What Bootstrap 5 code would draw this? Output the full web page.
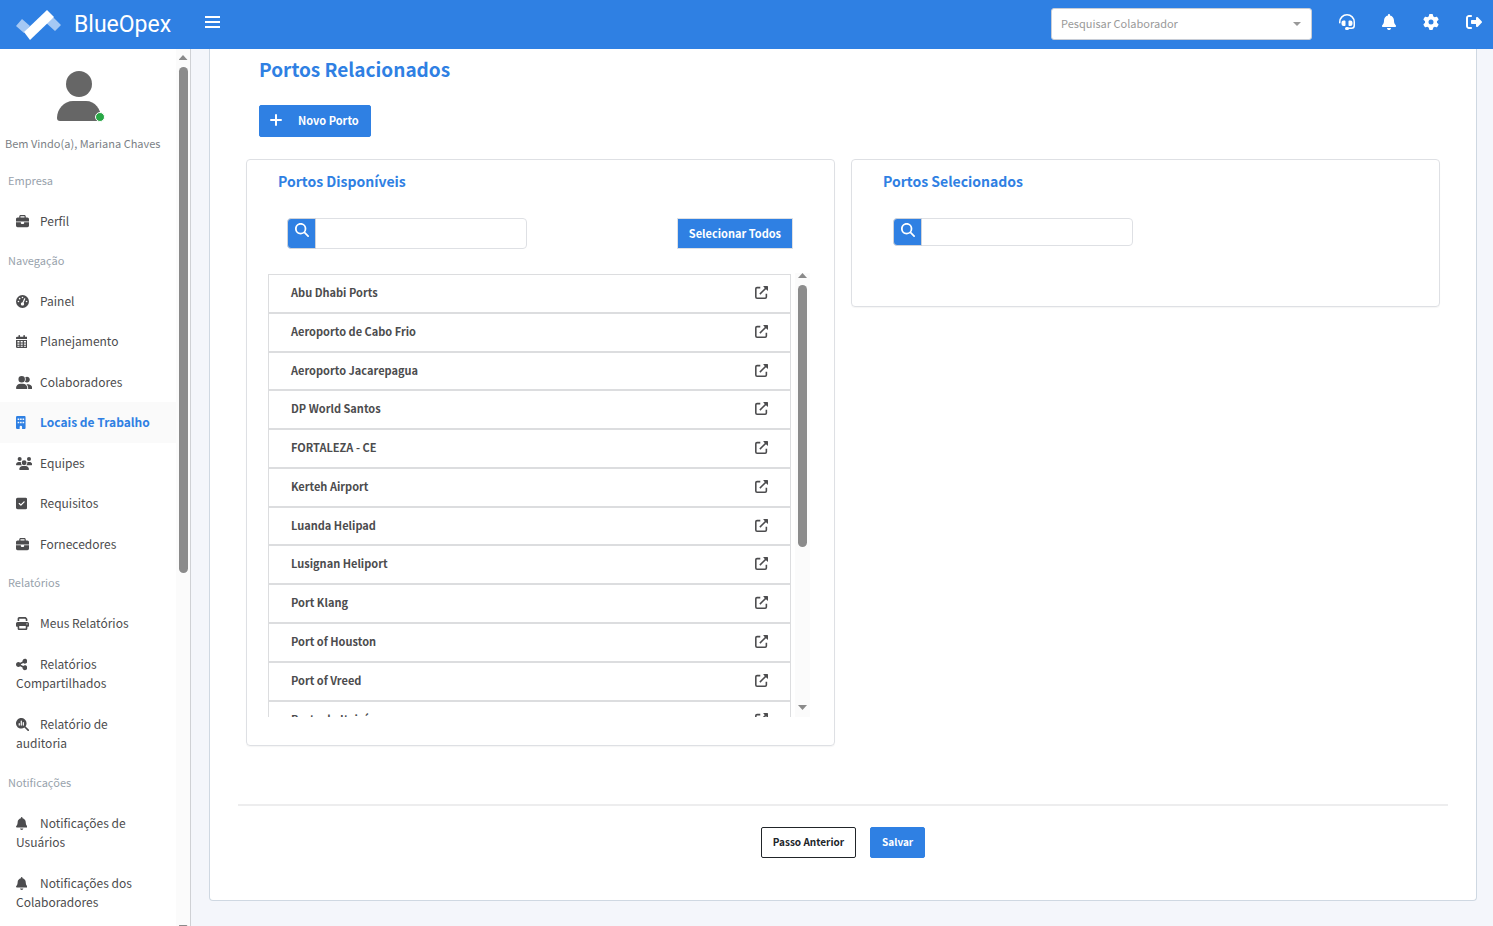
<!DOCTYPE html>
<html lang="pt-BR">
<head>
<meta charset="utf-8">
<meta name="viewport" content="width=device-width, initial-scale=1">
<title>BlueOpex - Portos Relacionados</title>
<link href="https://cdn.jsdelivr.net/npm/bootstrap@5.3.0/dist/css/bootstrap.min.css" rel="stylesheet">
<style>
  :root { --brand: #2f80e3; --ink: #4c4c4e; --line: #dee0e4; }
  body { font-family: "Noto Sans CJK JP", "Noto Sans", sans-serif; font-size: 11px; color: var(--ink); background: #f4f6fb; }
  .ico { height: 1em; width: auto; fill: currentColor; display: inline-block; vertical-align: -2px; }
  .topbar { height: 49px; background: var(--brand); }
  .brand-link { width: 189px; color: #fff; text-decoration: none; }
  .brand-text { font-family: "Roboto", sans-serif; font-size: 23px; line-height: 30px; font-weight: 400; -webkit-text-stroke: 0; }
  .top-nav { gap: 27px; margin: 0 11px 5px 27px; }
  .top-icon { font-size: 16px; line-height: 16px; color: #fff; }
  .employee-pick { appearance: none; width: 261px; height: 32px; margin-bottom: 2px; font-size: 11px; line-height: 18px; color: #999; border: 1px solid #c8cdd6; border-radius: 3px; padding: 0 28px 1px 9px;
    background: #fff url("data:image/svg+xml,%3Csvg xmlns='http://www.w3.org/2000/svg' viewBox='0 0 8 4'%3E%3Cpath fill='%23999' d='M0 0h8L4 4z'/%3E%3C/svg%3E") no-repeat right 10px center / 8px 4px; }
  .shell { height: calc(100vh - 49px); }
  .sidebar { width: 191px; background: #fff; border-right: 1px solid #cfd1d5; }
  .side-body { width: 176px; }
  .user-box { height: 113px; width: 160px; padding-top: 20px; }
  .avatar { width: 46px; height: 53px; }
  .online { width: 10px; height: 10px; right: -2px; bottom: 0; background: #28a745; border: 1px solid #fff; }
  .welcome { line-height: 18px; padding-top: 12px; padding-left: 5px; color: #7b7f86; }
  .side-title { font-size: 11px; line-height: 19px; padding: 9px 8px 11px; color: #98a2ac; margin: 0; font-weight: 400; }
  .side-link { display: block; font-size: 12px; line-height: 1.625; padding: 10px 16px 11px; color: var(--ink); text-decoration: none; }
  .side-link.active { background: #fafafa; color: var(--brand); font-weight: 700; }
  .side-ico { display: inline-block; width: 24px; font-size: 13px; line-height: 14px; }
  .bar-track { width: 15px; background: #fbfbfb; color: #8a8a8a; }
  .bar-thumb { width: 9px; background: #8b8b8b; border-radius: 5px; }
  .arrow-up, .arrow-down { width: 9px; height: 5px; background: currentColor; flex: none; }
  .arrow-up { clip-path: polygon(50% 0, 100% 100%, 0 100%); margin: 6px 0 7px; }
  .arrow-down { clip-path: polygon(0 0, 100% 0, 50% 100%); margin: 7px 0; }
  .sidebar .arrow-down { margin: auto 0 -4px; }
  .content { padding: 0 16px 25px 18px; }
  .sheet { background: #fff; border: 1px solid #cfd8e2; border-top: 0; border-radius: 0 0 4px 4px; padding: 0 28px; }
  .page-title { font-size: 19px; line-height: 24px; font-weight: 700; color: var(--brand); margin: 8px 21px 24px; }
  .btn-brand { background: var(--brand); border: 1px solid var(--brand); color: #fff; font-size: 11px; line-height: 18px; font-weight: 700; border-radius: 2px; padding: 5px 11px 7px; }
  .btn-brand:hover { background: #2670cc; color: #fff; }
  .btn-new { margin-left: 21px; height: 32px; padding: 0 11px 2px 10px; }
  .btn-all { border: 1px solid var(--line); border-radius: 0; height: 31px; padding: 4px 11px 6px; }
  .btn-foot { height: 31px; font-size: 10px; padding: 5px 11px 6px; }
  .btn-back { background: #fff; border: 1px solid #212529; color: #212529; font-weight: 700; line-height: 18px; border-radius: 2px; }
  .panels { margin: 22px 8px 0; gap: 16px; }
  .panel { flex: 1 1 0; border: 1px solid var(--line); border-radius: 4px; box-shadow: 0 1px 1px rgba(0,0,0,.04); padding: 0 24px 28px 21px; }
  .panel-selected { height: 148px; }
  .panel-title { font-size: 14px; line-height: 20px; font-weight: 700; color: var(--brand); margin: 11px 10px 27px; }
  .tools { padding: 0 17px 0 19px; }
  .finder { width: 240px; height: 31px; }
  .finder.slim { height: 28px; margin-left: 20px; }
  .finder .btn { background: var(--brand); color: #fff; border: 1px solid #cfd3da; border-radius: 4px 0 0 4px; width: 29px; padding: 4px 0 0; font-size: 14px; line-height: 14px; }
  .finder .form-control { border: 1px solid var(--line); border-radius: 0 4px 4px 0; padding: 0 8px; font-size: 12px; min-height: 0; }
  .port-area { height: 444px; margin-top: 24px; }
  .port-list { padding-top: 1px; }
  .port-item { border: 1px solid #dcdddf; padding: 7px 22px 9px; font-size: 11px; line-height: 1.89; font-weight: 700; background: #fff; }
  .port-item a { color: var(--ink); font-size: 13px; line-height: 20px; }
  .divider { border-top: 2px solid #ededee; opacity: 1; margin: 58px 0 21px; }
  .foot { padding-bottom: 42px; gap: 14px; }
</style>
</head>
<body class="overflow-hidden">
<svg class="d-none" aria-hidden="true">
  <symbol id="i-bell" viewBox="0 0 448 512"><path d="M224 0c-17.7 0-32 14.3-32 32V51.2C119 66 64 130.6 64 208v18.8c0 47-17.3 92.4-48.5 127.6l-7.4 8.3c-8.4 9.4-10.4 22.9-5.3 34.4S19.4 416 32 416H416c12.6 0 24-7.4 29.2-18.9s3.1-25-5.3-34.4l-7.4-8.3C401.3 319.2 384 273.9 384 226.8V208c0-77.4-55-142-128-156.8V32c0-17.7-14.3-32-32-32zm45.3 493.3c12-12 18.7-28.3 18.7-45.3H160c0 17 6.7 33.3 18.7 45.3s28.3 18.7 45.3 18.7s33.3-6.7 45.3-18.7z"/></symbol>
  <symbol id="i-gear" viewBox="0 0 512 512"><path d="M495.9 166.6c3.2 8.7 .5 18.4-6.4 24.6l-43.3 39.4c1.1 8.3 1.7 16.8 1.7 25.4s-.6 17.1-1.7 25.4l43.3 39.4c6.9 6.2 9.6 15.9 6.4 24.6c-4.4 11.9-9.7 23.3-15.8 34.3l-4.7 8.1c-6.6 11-14 21.4-22.1 31.2c-5.9 7.2-15.7 9.6-24.5 6.8l-55.7-17.7c-13.4 10.3-28.2 18.9-44 25.4l-12.5 57.1c-2 9.1-9 16.3-18.2 17.8c-13.8 2.3-28 3.5-42.5 3.5s-28.7-1.2-42.5-3.5c-9.2-1.5-16.2-8.7-18.2-17.8l-12.5-57.1c-15.8-6.5-30.6-15.1-44-25.4L83.1 425.9c-8.8 2.8-18.6 .3-24.5-6.8c-8.1-9.8-15.5-20.2-22.1-31.2l-4.7-8.1c-6.1-11-11.4-22.4-15.8-34.3c-3.2-8.7-.5-18.4 6.4-24.6l43.3-39.4C64.6 273.1 64 264.6 64 256s.6-17.1 1.7-25.4L22.4 191.2c-6.9-6.2-9.6-15.9-6.4-24.6c4.4-11.9 9.7-23.3 15.8-34.3l4.7-8.1c6.6-11 14-21.4 22.1-31.2c5.9-7.2 15.7-9.6 24.5-6.8l55.7 17.7c13.4-10.3 28.2-18.9 44-25.4l12.5-57.1c2-9.1 9-16.3 18.2-17.8C227.3 1.2 241.5 0 256 0s28.7 1.2 42.5 3.5c9.2 1.5 16.2 8.7 18.2 17.8l12.5 57.1c15.8 6.5 30.6 15.1 44 25.4l55.7-17.7c8.8-2.8 18.6-.3 24.5 6.8c8.1 9.8 15.5 20.2 22.1 31.2l4.7 8.1c6.1 11 11.4 22.4 15.8 34.3zM256 336a80 80 0 1 0 0-160 80 80 0 1 0 0 160z"/></symbol>
  <symbol id="i-exit" viewBox="0 0 512 512"><path d="M377.9 105.9L500.7 228.7c7.2 7.2 11.3 17.1 11.3 27.3s-4.1 20.1-11.3 27.3L377.9 406.1c-6.4 6.4-15 9.9-24 9.9c-18.7 0-33.9-15.2-33.9-33.9l0-62.1-128 0c-17.7 0-32-14.3-32-32l0-64c0-17.7 14.3-32 32-32l128 0 0-62.1c0-18.7 15.2-33.9 33.9-33.9c9 0 17.6 3.6 24 9.9zM160 96L96 96c-17.7 0-32 14.3-32 32l0 256c0 17.7 14.3 32 32 32l64 0c17.7 0 32 14.3 32 32s-14.3 32-32 32l-64 0c-53 0-96-43-96-96L0 128C0 75 43 32 96 32l64 0c17.7 0 32 14.3 32 32s-14.3 32-32 32z"/></symbol>
  <symbol id="i-headset" viewBox="0 0 512 512"><path d="M24 280V256a232 232 0 0 1 464 0v112a88 88 0 0 1-88 88H300" fill="none" stroke="currentColor" stroke-width="48" stroke-linecap="round"/><path d="M144 208h32c18 0 32 14 32 32v112c0 18-14 32-32 32h-32a64 64 0 0 1-64-64v-48a64 64 0 0 1 64-64zM368 208h-32c-18 0-32 14-32 32v112c0 18 14 32 32 32h32a64 64 0 0 0 64-64v-48a64 64 0 0 0-64-64z"/><rect x="192" y="416" width="128" height="96" rx="48"/></symbol>
  <symbol id="i-search" viewBox="0 0 512 512"><path d="M416 208c0 45.9-14.9 88.3-40 122.7L502.6 457.4c12.5 12.5 12.5 32.8 0 45.3s-32.8 12.5-45.3 0L330.7 376c-34.4 25.2-76.8 40-122.7 40C93.1 416 0 322.9 0 208S93.1 0 208 0S416 93.1 416 208zM208 352a144 144 0 1 0 0-288 144 144 0 1 0 0 288z"/></symbol>
  <symbol id="i-case" viewBox="0 0 512 512"><path d="M184 48H328c4.4 0 8 3.6 8 8V96H176V56c0-4.4 3.6-8 8-8zm-56 8V96H64C28.7 96 0 124.7 0 160v96H512V160c0-35.3-28.7-64-64-64H384V56c0-30.9-25.1-56-56-56H184c-30.9 0-56 25.1-56 56zM512 288H320v32c0 17.7-14.3 32-32 32H224c-17.7 0-32-14.3-32-32V288H0V416c0 35.3 28.7 64 64 64H448c35.3 0 64-28.7 64-64V288z"/></symbol>
  <symbol id="i-gauge" viewBox="0 0 512 512"><path fill-rule="evenodd" d="M0 256a256 256 0 1 1 512 0A256 256 0 1 1 0 256zM288 96a32 32 0 1 0-64 0 32 32 0 1 0 64 0zM256 416c35.300 0 64-28.700 64-64 0-17.400-6.900-33.100-18.100-44.600L366 161.700c5.300-12.100-.2-26.300-12.300-31.600s-26.300 .2-31.600 12.300L257.900 288H256c-35.300 0-64 28.700-64 64s28.700 64 64 64zM176 144a32 32 0 1 0-64 0 32 32 0 1 0 64 0zM96 288a32 32 0 1 0 0-64 32 32 0 1 0 0 64zM448 256a32 32 0 1 0-64 0 32 32 0 1 0 64 0z"/></symbol>
  <symbol id="i-calendar" viewBox="0 0 448 512"><path fill-rule="evenodd" d="M96 32a32 32 0 0 1 64 0v32h128V32a32 32 0 0 1 64 0v32h48a48 48 0 0 1 48 48v48H0v-48a48 48 0 0 1 48-48h48zM0 192h448v272a48 48 0 0 1-48 48H48a48 48 0 0 1-48-48zM56 240v56h80v-56zM184 240v56h80v-56zM312 240v56h80v-56zM56 336v48h80v-48zM184 336v48h80v-48zM312 336v48h80v-48zM56 424v40h80v-40zM184 424v40h80v-40zM312 424v40h80v-40z"/></symbol>
  <symbol id="i-pair" viewBox="0 0 640 512"><path d="M96 128a128 128 0 1 1 256 0A128 128 0 1 1 96 128zM0 482.300C0 383.800 79.800 304 178.300 304h91.400C368.200 304 448 383.800 448 482.300c0 16.400-13.300 29.700-29.700 29.700H29.700C13.300 512 0 498.700 0 482.300zM609.300 512H471.400c5.400-9.400 8.600-20.300 8.600-32v-8c0-60.700-27.100-115.200-69.800-151.800c2.400-.1 4.700-.2 7.100-.2h61.400C567.800 320 640 392.200 640 481.300c0 17-13.800 30.700-30.700 30.700zM432 256c-31 0-59-12.600-79.300-32.900C372.400 196.500 384 163.600 384 128c0-26.800-6.600-52.100-18.300-74.300C384.300 40.100 407.200 32 432 32c61.900 0 112 50.100 112 112s-50.100 112-112 112z"/></symbol>
  <symbol id="i-building" viewBox="0 0 384 512"><path fill-rule="evenodd" d="M48 0h288a48 48 0 0 1 48 48v416a48 48 0 0 1-48 48h-96v-80a48 48 0 0 0-96 0v80H48a48 48 0 0 1-48-48V48A48 48 0 0 1 48 0zM64 96v64h64V96zM160 96v64h64V96zM256 96v64h64V96zM64 224v64h64v-64zM160 224v64h64v-64zM256 224v64h64v-64z"/></symbol>
  <symbol id="i-users" viewBox="0 0 640 512"><path d="M144 0a80 80 0 1 1 0 160A80 80 0 1 1 144 0zM512 0a80 80 0 1 1 0 160A80 80 0 1 1 512 0zM0 298.700C0 239.800 47.800 192 106.700 192h42.700c15.900 0 31 3.500 44.600 9.700c-1.300 7.200-1.900 14.700-1.900 22.300c0 38.200 16.800 72.500 43.300 96H21.300C9.600 320 0 310.400 0 298.700zM405.300 320c26.600-23.500 43.300-57.800 43.300-96c0-7.600-.7-15-1.900-22.300c13.600-6.300 28.700-9.700 44.600-9.700h42.700C592.200 192 640 239.800 640 298.700c0 11.800-9.600 21.300-21.300 21.300H405.300zM224 224a96 96 0 1 1 192 0 96 96 0 1 1 -192 0zM128 485.300C128 411.700 187.700 352 261.300 352H378.700C452.300 352 512 411.700 512 485.300c0 14.700-11.900 26.700-26.700 26.700H154.700c-14.700 0-26.700-11.900-26.700-26.700z"/></symbol>
  <symbol id="i-check" viewBox="0 0 448 512"><path d="M64 32C28.700 32 0 60.700 0 96V416c0 35.300 28.700 64 64 64H384c35.300 0 64-28.700 64-64V96c0-35.300-28.700-64-64-64H64zM337 209L209 337c-9.400 9.400-24.600 9.400-33.900 0l-64-64c-9.400-9.400-9.400-24.600 0-33.900s24.600-9.400 33.900 0l47 47L303 175c9.400-9.400 24.600-9.400 33.900 0s9.400 24.600 0 33.900z"/></symbol>
  <symbol id="i-print" viewBox="0 0 512 512"><path d="M128 0C92.700 0 64 28.700 64 64v96h64V64H354.700L384 93.300V160h64V93.300c0-17-6.700-33.300-18.700-45.300L400 18.700C388 6.700 371.700 0 354.700 0H128zM384 352v96H128V352H384zm64 32h32c17.700 0 32-14.300 32-32V256c0-35.300-28.700-64-64-64H64c-35.300 0-64 28.700-64 64v96c0 17.700 14.300 32 32 32H64v64c0 35.300 28.700 64 64 64H384c35.300 0 64-28.700 64-64V384zM432 248a24 24 0 1 1 0 48 24 24 0 1 1 0-48z"/></symbol>
  <symbol id="i-share" viewBox="0 0 448 512"><path d="M352 224c53 0 96-43 96-96s-43-96-96-96s-96 43-96 96c0 4 .2 8 .7 11.900l-94.100 47C145.400 170.200 121.900 160 96 160c-53 0-96 43-96 96s43 96 96 96c25.900 0 49.400-10.200 66.600-26.900l94.100 47c-.5 3.900-.7 7.800-.7 11.900c0 53 43 96 96 96s96-43 96-96s-43-96-96-96c-25.900 0-49.400 10.200-66.600 26.900l-94.100-47c.5-3.900 .7-7.800 .7-11.900s-.2-8-.7-11.900l94.100-47C302.600 213.800 326.100 224 352 224z"/></symbol>
  <symbol id="i-audit" viewBox="0 0 512 512"><path fill-rule="evenodd" d="M416 208c0 46-15 88-40 123l127 126a32 32 0 0 1-46 46L331 376A208 208 0 1 1 416 208zM104 216v64a24 24 0 0 0 48 0v-64a24 24 0 0 0-48 0zM184 120v160a24 24 0 0 0 48 0V120a24 24 0 0 0-48 0zM264 184v96a24 24 0 0 0 48 0v-96a24 24 0 0 0-48 0z"/></symbol>
  <symbol id="i-open" viewBox="0 0 512 512"><path d="M208 64H80a48 48 0 0 0-48 48v320a48 48 0 0 0 48 48h320a48 48 0 0 0 48-48V304M192 320L440 72" fill="none" stroke="currentColor" stroke-width="62"/><path d="M320 0h168a24 24 0 0 1 24 24v168l-56-44-92-92z"/></symbol>
</svg>

<header class="topbar d-flex align-items-center">
  <a class="brand-link d-flex align-items-center" href="#">
    <svg class="ms-3" width="46" height="30" viewBox="0 0 46 30" aria-hidden="true">
      <path fill="#a5c8f4" d="M6 9l-6 7 8 7 6-7zM39 21l6-6-10-10-7 6z"/>
      <path fill="#fff" d="M8 22L31 0l7 7-24 23z"/>
    </svg>
    <span class="brand-text ms-2 ps-1">BlueOpex</span>
  </a>
  <button class="btn border-0 p-0 ms-3 text-white lh-1" type="button" aria-label="Menu">
    <svg class="d-block mb-1" width="15" height="13" viewBox="0 0 15 13" fill="currentColor"><path d="M0 0h15v2H0zM0 5h15v2H0zM0 10h15v2H0z"/></svg>
  </button>
  <select class="employee-pick ms-auto" aria-label="Pesquisar Colaborador"><option>Pesquisar Colaborador</option></select>
  <nav class="top-nav d-flex align-items-center" aria-label="Atalhos">
    <a class="top-icon" href="#" aria-label="Suporte"><svg class="ico d-block" viewBox="0 0 512 512"><use href="#i-headset"/></svg></a>
    <a class="top-icon" href="#" aria-label="Alertas"><svg class="ico d-block" viewBox="0 0 448 512"><use href="#i-bell"/></svg></a>
    <a class="top-icon" href="#" aria-label="Ajustes"><svg class="ico d-block" viewBox="0 0 512 512"><use href="#i-gear"/></svg></a>
    <a class="top-icon" href="#" aria-label="Sair"><svg class="ico d-block" viewBox="0 0 512 512"><use href="#i-exit"/></svg></a>
  </nav>
</header>

<div class="shell d-flex">
  <aside class="sidebar d-flex flex-shrink-0 overflow-hidden">
    <div class="side-body flex-shrink-0">
      <div class="user-box">
        <div class="avatar position-relative mx-auto">
          <svg width="46" height="53" viewBox="0 0 46 53" fill="#666"><circle cx="22" cy="15" r="13"/><path d="M16 32h13c9 0 15 8 15 17 0 2-1 3-3 3H3c-2 0-3-1-3-3 0-9 7-17 16-17z"/></svg>
          <span class="online position-absolute rounded-circle"></span>
        </div>
        <div class="welcome text-nowrap">Bem Vindo(a), Mariana Chaves</div>
      </div>
      <nav id="menu" aria-label="Principal"></nav>
    </div>
    <div class="bar-track d-flex flex-column align-items-center" aria-hidden="true">
      <span class="arrow-up"></span>
      <span class="bar-thumb" style="height:57.7%"></span>
      <span class="arrow-down"></span>
    </div>
  </aside>

  <main class="content flex-grow-1 overflow-hidden">
    <div class="sheet overflow-hidden">
      <h1 class="page-title">Portos Relacionados</h1>
      <button class="btn btn-brand btn-new d-flex align-items-center" type="button">
        <svg class="me-3" width="12" height="12" viewBox="0 0 12 12" aria-hidden="true"><path d="M6 1v10M1 6h10" stroke="currentColor" stroke-width="2" stroke-linecap="round"/></svg>
        Novo Porto
      </button>
      <div class="panels d-flex align-items-start">
        <section class="panel">
          <h2 class="panel-title">Portos Disponíveis</h2>
          <div class="tools d-flex justify-content-between">
            <div class="finder input-group flex-nowrap">
              <button class="btn d-flex justify-content-center" type="button" aria-label="Buscar disponíveis"><svg class="ico" viewBox="0 0 512 512"><use href="#i-search"/></svg></button>
              <input class="form-control" type="text" aria-label="Buscar portos disponíveis">
            </div>
            <button class="btn btn-brand btn-all" type="button">Selecionar Todos</button>
          </div>
          <div class="port-area d-flex">
            <ul id="ports" class="port-list list-unstyled flex-grow-1 overflow-hidden mb-0"></ul>
            <div class="bar-track d-flex flex-column align-items-center ms-1 flex-shrink-0" aria-hidden="true">
              <span class="arrow-up mt-0"></span>
              <span class="bar-thumb" style="height:59%"></span>
              <span class="arrow-down mt-auto"></span>
            </div>
          </div>
        </section>
        <section class="panel panel-selected pb-0">
          <h2 class="panel-title">Portos Selecionados</h2>
          <div class="finder slim input-group flex-nowrap">
            <button class="btn d-flex justify-content-center" type="button" aria-label="Buscar selecionados"><svg class="ico" viewBox="0 0 512 512"><use href="#i-search"/></svg></button>
            <input class="form-control" type="text" aria-label="Buscar portos selecionados">
          </div>
        </section>
      </div>
      <hr class="divider">
      <div class="foot d-flex justify-content-center">
        <button class="btn btn-foot btn-back" type="button">Passo Anterior</button>
        <button class="btn btn-brand btn-foot" type="button">Salvar</button>
      </div>
    </div>
  </main>
</div>

<script src="https://cdn.jsdelivr.net/npm/bootstrap@5.3.0/dist/js/bootstrap.bundle.min.js"></script>
<script>
  const icon = id => {
    const box = document.getElementById('i-' + id).getAttribute('viewBox');
    return `<svg class="ico" viewBox="${box}" aria-hidden="true"><use href="#i-${id}"/></svg>`;
  };
  const groups = [
    ['Empresa', [['case', 'Perfil']]],
    ['Navegação', [['gauge', 'Painel'], ['calendar', 'Planejamento'], ['pair', 'Colaboradores'], ['building', 'Locais de Trabalho', true],
      ['users', 'Equipes'], ['check', 'Requisitos'], ['case', 'Fornecedores']]],
    ['Relatórios', [['print', 'Meus Relatórios'], ['share', 'Relatórios Compartilhados'], ['audit', 'Relatório de auditoria']]],
    ['Notificações', [['bell', 'Notificações de Usuários'], ['bell', 'Notificações dos Colaboradores']]]
  ];
  document.getElementById('menu').innerHTML = groups.map(([title, items]) =>
    `<h3 class="side-title">${title}</h3>` + items.map(([i, text, on]) =>
      `<a class="side-link${on ? ' active' : ''}" href="#"><span class="side-ico">${icon(i)}</span>${text}</a>`).join('')).join('');

  const ports = ['Abu Dhabi Ports', 'Aeroporto de Cabo Frio', 'Aeroporto Jacarepagua', 'DP World Santos', 'FORTALEZA - CE', 'Kerteh Airport',
    'Luanda Helipad', 'Lusignan Heliport', 'Port Klang', 'Port of Houston', 'Port of Vreed', 'Porto do Itajaí'];
  document.getElementById('ports').innerHTML = ports.map(p =>
    `<li class="port-item d-flex justify-content-between"><span>${p}</span><a href="#" aria-label="Abrir ${p}">${icon('open')}</a></li>`).join('');
</script>
</body>
</html>
